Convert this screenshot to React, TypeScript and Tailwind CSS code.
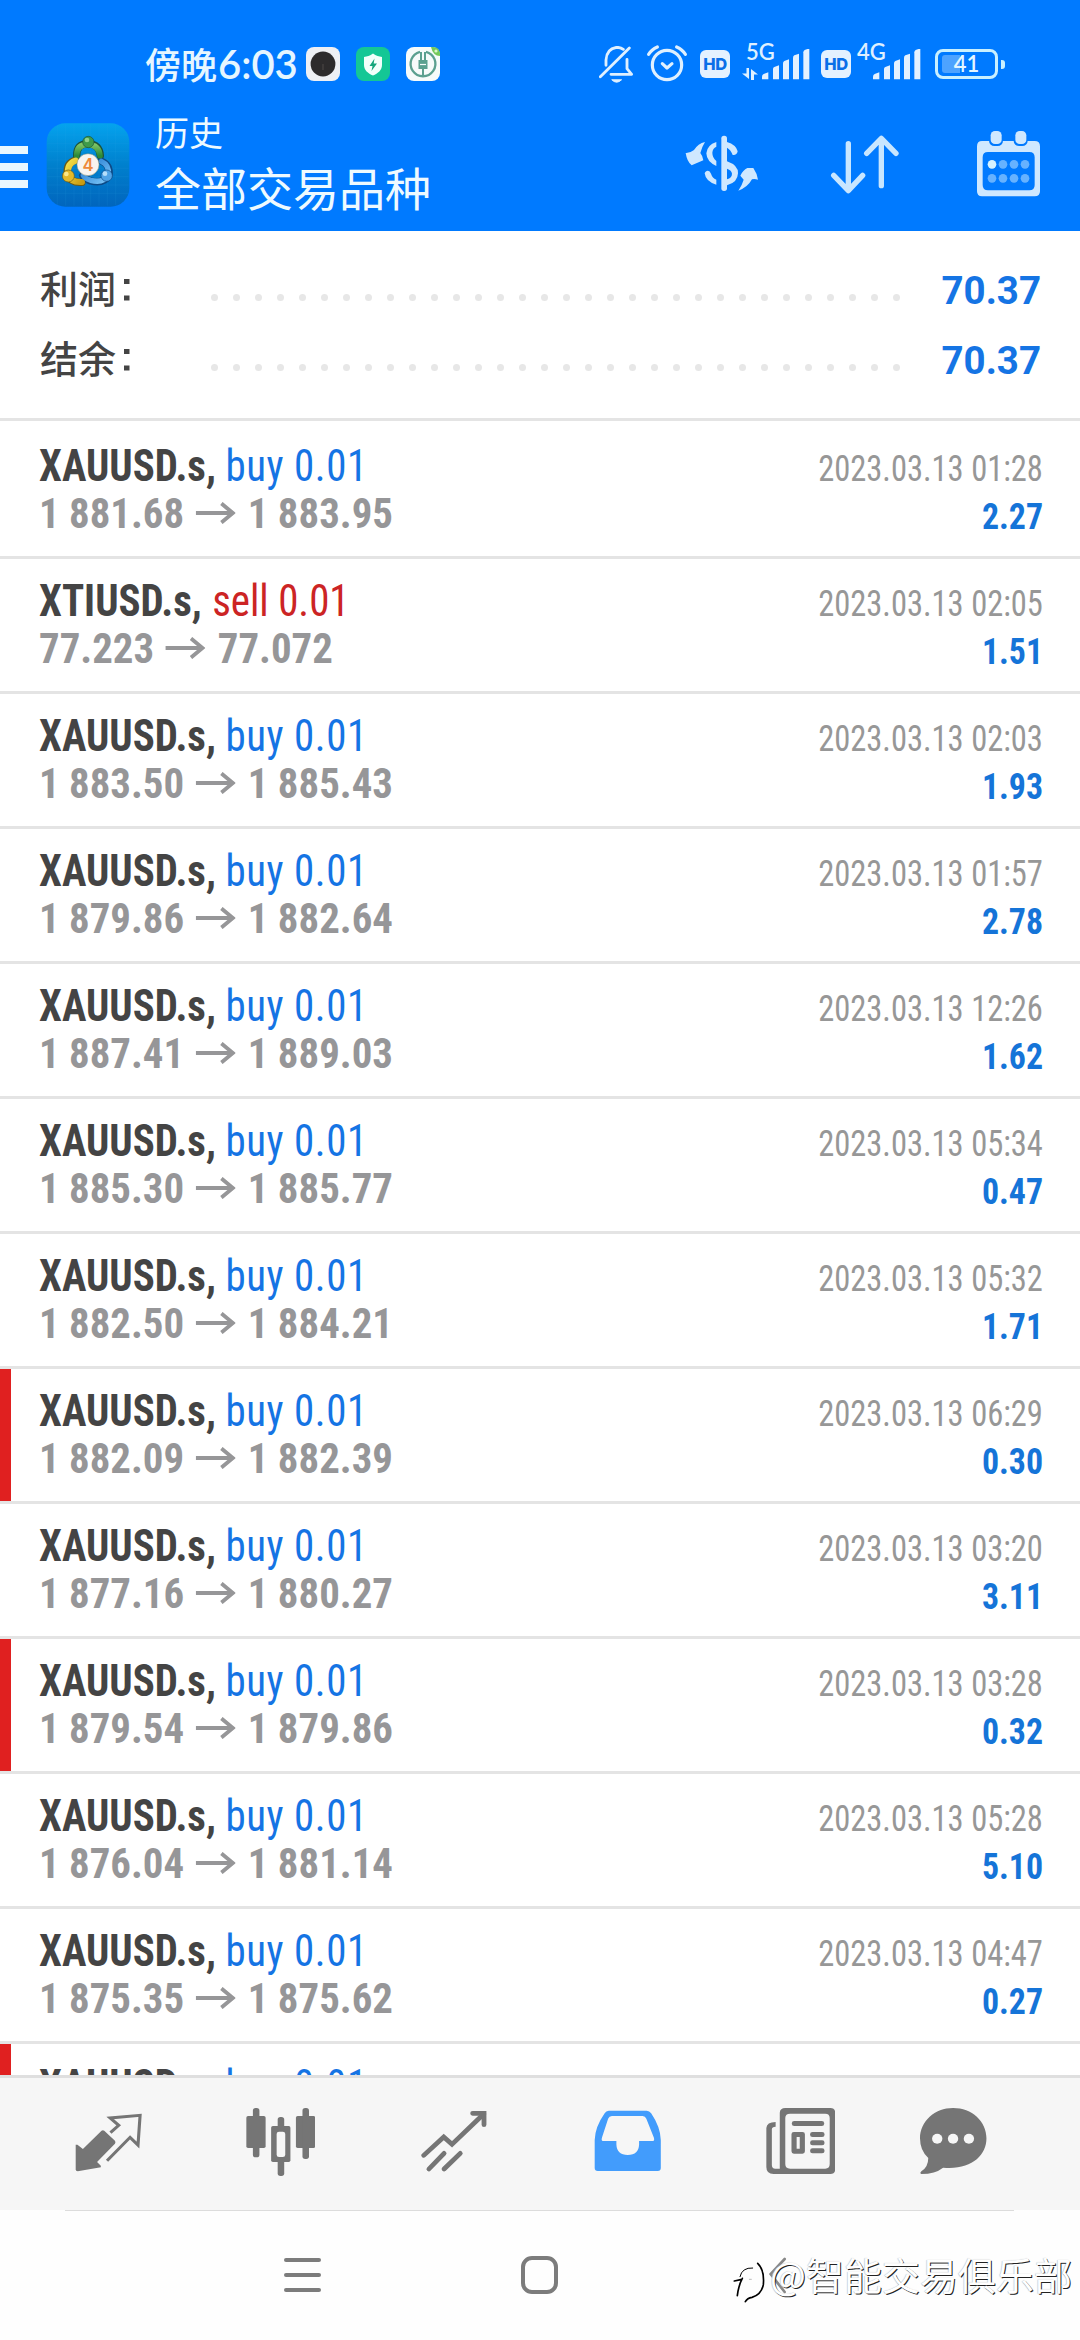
type Trade = {
  symbol: string;
  side: 'buy' | 'sell';
  from: string;
  to: string;
  time: string;
  profit: string;
  flagged?: boolean;
};

const trades: Trade[] = [
  { symbol: 'XAUUSD.s', side: 'buy', from: '1 881.68', to: '1 883.95', time: '2023.03.13 01:28', profit: '2.27' },
  { symbol: 'XTIUSD.s', side: 'sell', from: '77.223', to: '77.072', time: '2023.03.13 02:05', profit: '1.51' },
  { symbol: 'XAUUSD.s', side: 'buy', from: '1 883.50', to: '1 885.43', time: '2023.03.13 02:03', profit: '1.93' },
  { symbol: 'XAUUSD.s', side: 'buy', from: '1 879.86', to: '1 882.64', time: '2023.03.13 01:57', profit: '2.78' },
  { symbol: 'XAUUSD.s', side: 'buy', from: '1 887.41', to: '1 889.03', time: '2023.03.13 12:26', profit: '1.62' },
  { symbol: 'XAUUSD.s', side: 'buy', from: '1 885.30', to: '1 885.77', time: '2023.03.13 05:34', profit: '0.47' },
  { symbol: 'XAUUSD.s', side: 'buy', from: '1 882.50', to: '1 884.21', time: '2023.03.13 05:32', profit: '1.71' },
  { symbol: 'XAUUSD.s', side: 'buy', from: '1 882.09', to: '1 882.39', time: '2023.03.13 06:29', profit: '0.30', flagged: true },
  { symbol: 'XAUUSD.s', side: 'buy', from: '1 877.16', to: '1 880.27', time: '2023.03.13 03:20', profit: '3.11' },
  { symbol: 'XAUUSD.s', side: 'buy', from: '1 879.54', to: '1 879.86', time: '2023.03.13 03:28', profit: '0.32', flagged: true },
  { symbol: 'XAUUSD.s', side: 'buy', from: '1 876.04', to: '1 881.14', time: '2023.03.13 05:28', profit: '5.10' },
  { symbol: 'XAUUSD.s', side: 'buy', from: '1 875.35', to: '1 875.62', time: '2023.03.13 04:47', profit: '0.27' },
];

function HdBadge({ className }: { className: string }) {
  return (
    <div className={`flex h-7 w-[30px] shrink-0 items-center justify-center rounded-[6px] bg-[#e4f1ff] font-[Inter] text-[16.500px] font-extrabold leading-none tracking-[-0.5px] text-[#0a6fe8] ${className}`}>
      HD
    </div>
  );
}

function SignalBars() {
  return (
    <svg className="h-[31px] w-[48px]" viewBox="0 0 144 93" fill="#e4f1ff">
      <path d="M0 91V83Q0 77 5 75L19 70V91Z" />
      <path d="M33 91V60Q33 56 37 54L51 49V91Z" />
      <path d="M63 91V43Q63 38 67 36L81 31V91Z" />
      <path d="M93 91V26Q93 21 97 19L111 14V91Z" />
      <path d="M124 91V10Q124 5 128 3L142 -2V91Z" />
    </svg>
  );
}

function StatusBar() {
  return (
    <div className="flex h-[100px] items-start">
      <div className="ml-[145px] flex w-[152px] shrink-0 items-baseline pt-9 whitespace-nowrap text-[#e6f6ff]">
        <span className="shrink-0 font-['Noto_Sans_CJK_SC',sans-serif] text-[36px] font-medium leading-[54px]">傍晚</span>
        <span className="ml-px font-[Lato] text-[40px] font-semibold leading-[50px]">6:03</span>
      </div>
      <svg className="mt-[47px] ml-[9px] h-[34px] w-[34px]" viewBox="0 0 34 34">
        <rect width="34" height="34" rx="8" fill="#eef0f4" />
        <circle cx="17" cy="17" r="12.4" fill="#2d2b2c" />
        <path d="M17 17v6" stroke="#55504f" strokeWidth="0.8" />
      </svg>
      <svg className="mt-[47px] ml-4 h-[34px] w-[34px]" viewBox="0 0 34 34">
        <rect width="34" height="34" rx="8" fill="#14c795" />
        <path d="M17 6.5C14 9 11 9.5 8 10v8c0 5 4 8.500 9 10.500 5-2 9-5.500 9-10.500v-8c-3-.5-6-1-9-3.500Z" fill="#f2fffb" />
        <path d="M18.500 11.500 13.500 19h3l-1 5 5.500-7.500h-3.300Z" fill="#14a67c" />
      </svg>
      <svg className="mt-[47px] ml-4 h-[34px] w-[34px]" viewBox="0 0 34 34">
        <rect width="34" height="34" rx="8" fill="#f6fbfa" />
        <path d="M14 4.800A12.400 12.400 0 1 0 20 4.800" fill="none" stroke="#5ba08f" strokeWidth="2.300" />
        <path d="M15 5v9M19 5v9M17 19v9" fill="none" stroke="#5ba08f" strokeWidth="2" />
        <path d="M12.500 13h9v9h-9Z" fill="#5ba08f" />
        <path d="M14 17.500h6" stroke="#f6fbfa" strokeWidth="1.200" />
        <path d="M25 0h2q7 0 7 8v1q-7 0-9-9Z" fill="#74c95a" />
        <circle cx="30" cy="4" r="1.600" fill="#d9f5c8" />
      </svg>

      {/* silent, alarm */}
      <svg className="mt-[46px] ml-[159px] h-[38px] w-[35px]" viewBox="57 48 105 114" fill="none" stroke="#dff0ff" strokeWidth="8.500" strokeLinecap="round" strokeLinejoin="round">
        <path d="M61 140 148 54" />
        <path d="M78 106V90Q80 56 110 52Q122 52 130 58" />
        <path d="M93 133H155L141 116V88" />
        <path d="M96 150Q110 164 124 150Z" fill="#dff0ff" strokeWidth="3" />
      </svg>
      <svg className="mt-[45px] ml-[13px] h-[38px] w-[40px]" viewBox="202 45 120 114" fill="none" stroke="#dff0ff" strokeWidth="9.500" strokeLinecap="round">
        <circle cx="262" cy="105" r="44" />
        <path d="M207 73Q215 59 233 51M317 73Q309 59 291 51" />
        <path d="M248 101 262 114 277 101" strokeLinejoin="round" />
      </svg>
      <HdBadge className="mt-[50px] ml-[13px]" />
      <div className="relative mt-[49px] ml-[32px] h-[31px] w-[48px]">
        <span className="absolute -top-[8px] -left-[16px] font-[Lato] text-[22px] font-semibold leading-[22px] text-[#dff0ff]">5G</span>
        <svg className="absolute top-[19px] -left-[20px] h-[12px] w-[17px]" viewBox="0 0 17 12" fill="#dff0ff">
          <path d="M4.500 0h2.500v11L0 5.500h4.500ZM9 12V1l7 5.500h-4V12Z" />
        </svg>
        <SignalBars />
      </div>
      <HdBadge className="mt-[50px] ml-[11px]" />
      <div className="relative mt-[49px] ml-[22px] h-[31px] w-[48px]">
        <span className="absolute -top-[8px] -left-[16px] font-[Lato] text-[22px] font-semibold leading-[22px] text-[#dff0ff]">4G</span>
        <SignalBars />
      </div>
      <div className="mt-[49px] ml-[14px] flex items-center">
        <div className="relative flex h-[30px] w-[63px] items-center justify-center rounded-[8px] border-[3px] border-[#c9f0ff]">
          <div className="absolute top-[3px] left-1 h-[18px] w-[18px] rounded-l-[3px] bg-[#4da3ff]" />
          <span className="relative font-[Lato] text-[22px] font-semibold leading-none text-[#e4f6ff]">41</span>
        </div>
        <div className="ml-[3px] h-[9px] w-1 rounded-r-[3px] bg-[#c9f0ff]" />
      </div>
    </div>
  );
}

function AppLogo() {
  return (
    <svg className="mt-[23px] ml-[18px] h-[84px] w-[84px]" viewBox="49 24 250 252">
      <defs>
        <linearGradient id="tile" x1="0" y1="0" x2="0" y2="1">
          <stop offset="0" stopColor="#04a3ee" />
          <stop offset="0.5" stopColor="#0080cd" />
          <stop offset="1" stopColor="#0165bd" />
        </linearGradient>
        <linearGradient id="green" x1="0" y1="0" x2="0" y2="1">
          <stop offset="0" stopColor="#7fc564" />
          <stop offset="1" stopColor="#2c8a38" />
        </linearGradient>
        <linearGradient id="gold" x1="0" y1="0" x2="1" y2="1">
          <stop offset="0" stopColor="#f5e04a" />
          <stop offset="1" stopColor="#c89c12" />
        </linearGradient>
        <linearGradient id="sky" x1="0" y1="0" x2="1" y2="1">
          <stop offset="0" stopColor="#1d77cf" />
          <stop offset="1" stopColor="#7cc6f7" />
        </linearGradient>
      </defs>
      <rect x="50" y="25" width="248" height="250" rx="56" fill="url(#tile)" />
      <path d="M82 30V270M107 28V272M132 28V272M157 28V272M182 28V272M207 28V272M232 28V272M257 30V270M54 60H294M52 85H296M52 110H296M52 135H296M52 160H296M52 185H296M52 210H296M54 235H294" stroke="#3db0ee" strokeOpacity="0.22" strokeWidth="1.500" />
      <g fill="none" strokeLinecap="round">
        <path d="M140 122Q140 86 174 86Q209 88 211 122" stroke="#1d5136" strokeWidth="22" />
        <path d="M136 136Q108 144 112 178Q120 204 156 202" stroke="#6b5a14" strokeWidth="22" />
        <path d="M214 138Q241 150 237 180Q222 208 182 198Q162 190 158 182" stroke="#0e4a86" strokeWidth="22" />
        <path d="M140 122Q140 88 174 88Q207 90 210 122" stroke="url(#green)" strokeWidth="17" />
        <path d="M137 137Q110 146 114 178Q122 203 156 201" stroke="url(#gold)" strokeWidth="18" />
        <path d="M214 139Q239 150 235 180Q220 206 182 196Q164 190 160 182" stroke="url(#sky)" strokeWidth="16" />
      </g>
      <circle cx="175" cy="81" r="17" fill="#3f9a4a" stroke="#1d5136" strokeWidth="2" />
      <circle cx="171" cy="75" r="7" fill="#8fd08b" />
      <circle cx="115" cy="183" r="18" fill="#e3b92a" stroke="#6b5a14" strokeWidth="2" />
      <circle cx="109" cy="177" r="7" fill="#fbe889" />
      <circle cx="230" cy="182" r="17" fill="#4fa3e6" stroke="#0e4a86" strokeWidth="2" />
      <circle cx="225" cy="176" r="7" fill="#b5defa" />
      <circle cx="174" cy="149" r="33" fill="#f8f4f0" stroke="#7d8a72" strokeWidth="1.500" />
      <text x="174" y="167" textAnchor="middle" fontFamily="Inter, sans-serif" fontSize="50" fontWeight="600" fill="#ee8a3c">4</text>
    </svg>
  );
}

function AppBar() {
  return (
    <div className="flex h-[131px] items-start">
      <div className="mt-[46px] flex w-7 flex-col gap-[9px]">
        <div className="h-2 bg-[#e9f7ff]" />
        <div className="h-2 bg-[#e9f7ff]" />
        <div className="h-2 bg-[#e9f7ff]" />
      </div>
      <AppLogo />
      <div className="ml-[25px] flex w-[530px] flex-col font-['Noto_Sans_CJK_SC',sans-serif] text-[#eefaff]">
        <span className="mt-[6px] text-[34px] leading-[52px]">历史</span>
        <span className="-mt-[4px] text-[46px] leading-[64px]">全部交易品种</span>
      </div>
      <svg className="mt-[34px] h-[59px] w-[74px]" viewBox="76 72 222 177" fill="#cfe8ff">
        <rect x="185" y="77" width="17" height="166" rx="8" />
        <path d="M78 129Q90 130 103 120Q115 101 136 96Q126 112 122 129Q130 139 131 151L96 166Q82 155 78 129Z" />
        <path d="M170 96V110Q159 115 158 128Q158 143 170 153V168Q141 155 140 130Q142 105 170 96Z" />
        <path d="M202 96Q229 104 234 124Q231 137 219 135Q213 119 202 113Z" />
        <path d="M202 154Q236 166 235 190Q234 218 202 226ZM202 176V208Q217 204 217 191Q216 181 202 176Z" fillRule="evenodd" />
        <path d="M141 183Q150 180 154 191Q158 204 170 209V224Q138 215 135 190Q136 185 141 183Z" />
        <path d="M236 242Q247 226 252 209L242 197Q250 180 263 174L281 174Q292 190 295 209Q284 205 277 208Q264 232 236 242Z" />
      </svg>
      <svg className="mt-[34px] ml-[71px] h-[60px] w-[70px]" viewBox="511 72 210 180" fill="none" stroke="#c8e6ff" strokeWidth="16" strokeLinecap="round" strokeLinejoin="round">
        <path d="M566 101V240M522 196 566 242 609 196" />
        <path d="M665 227V87M621 130 665 85 709 130" />
      </svg>
      <svg className="mt-[30px] ml-[76px] h-[67px] w-[65px]" viewBox="948 60 195 201" fill="#cfe8ff">
        <path d="M966 93H1124Q1140 93 1140 109V244Q1140 259 1124 259H966Q951 259 951 244V109Q951 93 966 93ZM984 126Q968 126 968 142V225Q968 241 984 241H1108Q1124 241 1124 225V142Q1124 126 1108 126Z" fillRule="evenodd" />
        <rect x="987" y="58" width="42" height="50" rx="16" fill="#007aff" />
        <rect x="1061" y="58" width="42" height="50" rx="16" fill="#007aff" />
        <rect x="992" y="63" width="33" height="39" rx="13" />
        <rect x="1066" y="63" width="33" height="39" rx="13" />
        <circle cx="996" cy="163" r="13" fill="#d6f2ff" />
        <g fill="#66b2ff">
          <circle cx="1029" cy="163" r="13" /><circle cx="1062" cy="163" r="13" /><circle cx="1095" cy="163" r="13" />
          <circle cx="996" cy="205" r="13" /><circle cx="1029" cy="205" r="13" /><circle cx="1062" cy="205" r="13" /><circle cx="1095" cy="205" r="13" />
        </g>
      </svg>
    </div>
  );
}

function SummaryRow({ label, value }: { label: string; value: string }) {
  return (
    <div className="flex h-[70px] items-center">
      <span className="w-[83px] font-['Noto_Sans_CJK_SC',sans-serif] text-[38px] font-medium leading-[70px] text-[#444]">{label}</span>
      <svg className="mt-[5px] h-[22px] w-[7px]" viewBox="0 0 7 22" fill="#444">
        <rect x="1" y="0" width="5.500" height="5" />
        <rect x="1" y="16.500" width="5.500" height="5" />
      </svg>
      <div className="mt-[21px] ml-[81px] flex flex-1 gap-[15px]">
        {Array.from({ length: 32 }, (_, i) => (
          <span key={i} className="h-[7px] w-[7px] shrink-0 rounded-full bg-[#e7e7e7]" />
        ))}
      </div>
      <span className="mt-[7px] font-[Roboto] text-[38.500px] font-bold leading-[60px] text-[#1574e4]">{value}</span>
    </div>
  );
}

function TradeRow({ t }: { t: Trade }) {
  return (
    <div className="relative flex h-[135px] shrink-0 justify-between border-b-[3px] border-[#e4e4e4] pr-[37px] pl-[39px] font-['Roboto_Condensed',Roboto,sans-serif]">
      {t.flagged && <div className="absolute top-0 left-0 h-[132px] w-[11px] bg-[#e02020]" />}
      <div className="flex flex-col items-start pt-[18px]">
        <div className="origin-left scale-x-[0.93] text-[44px] leading-[48px] whitespace-pre">
          <span className="font-bold text-[#444]">{t.symbol}, </span>
          <span className={t.side === 'buy' ? 'tracking-[0.6px] text-[#1574e4]' : 'ml-px text-[#cc2424]'}>{t.side} 0.01</span>
        </div>
        <div className="-mt-px flex origin-left scale-x-[0.95] items-center text-[43px] font-bold leading-[48px] text-[#969698]">
          <span>{t.from}</span>
          <svg className="mr-[13px] ml-[12px] h-[22px] w-[42px]" viewBox="0 0 42 22" fill="none" stroke="#969698" strokeWidth="4">
            <path d="M0 11H39M27 1.500 39 11 27 20.500" />
          </svg>
          <span>{t.to}</span>
        </div>
      </div>
      <div className="flex flex-col items-end pt-[21px] text-[36px] leading-[48px]">
        <span className="origin-right scale-x-[0.903] text-[#979797]">{t.time}</span>
        <span className="origin-right scale-x-[0.94] font-bold text-[#1574d8]">{t.profit}</span>
      </div>
    </div>
  );
}

function TabBar() {
  const icon = 'h-[68px] w-[69px] shrink-0';
  return (
    <div className="flex h-[135px] items-start border-t-[3px] border-[#dfdfdf] bg-[#f6f6f6] pt-[30px] pl-[75px]">
      <svg className={icon} viewBox="217 234 200.4 204" preserveAspectRatio="none" fill="#757575">
        <path d="M219 344H224L240 357L294 302Q298 299 302 302L333 332Q336 337 333 341L281 396L292 407V412L225 424Q219 423 219 419Z" />
        <path d="M320 308 344 286 319 264 406 256 400 345 377 322 310 392" fill="none" stroke="#757575" strokeWidth="9" />
      </svg>
      <svg className={`${icon} ml-[102px]`} viewBox="715 234 200.4 204" preserveAspectRatio="none" fill="#757575">
        <rect x="716" y="258" width="56" height="96" rx="5" /><rect x="735" y="234" width="19" height="148" rx="8" />
        <rect x="860" y="258" width="56" height="96" rx="5" /><rect x="879" y="234" width="19" height="153" rx="8" />
        <rect x="788" y="288" width="56" height="108" rx="5" /><rect x="807" y="261" width="19" height="177" rx="8" />
        <rect x="804" y="305" width="25" height="76" rx="7" fill="#f6f6f6" />
      </svg>
      <svg className={`${icon} ml-[106px]`} viewBox="1223 234 200.4 204" preserveAspectRatio="none" fill="none" stroke="#757575" strokeWidth="14" strokeLinecap="round">
        <path d="M1231 376 1289 321 1313 343 1405 252" strokeLinejoin="miter" />
        <path d="M1373 250H1406V284" />
        <path d="M1246 417 1290 370M1290 417 1337 370" />
      </svg>
      <svg className={`${icon} ml-[104px]`} viewBox="156 234 200.4 204" preserveAspectRatio="none">
        <path d="M199 242H309Q317 242 322 250Q349 291 350 330V414Q350 423 341 423H167Q158 423 158 414V330Q159 291 187 250Q191 242 199 242ZM208 258Q200 258 197 266L179 323Q176 333 184 333H221V343Q222 375 254 375Q286 375 287 343V333H325Q333 333 330 323L308 266Q305 258 297 258Z" fill="#429cfc" fillRule="evenodd" />
      </svg>
      <svg className={`${icon} ml-[103px]`} viewBox="657 234 200.4 204" preserveAspectRatio="none" fill="#757575">
        <path d="M713 234H844Q858 234 858 248V418Q858 432 844 432H679Q658 432 658 411V294Q659 276 685 276V290Q674 290 674 298V405Q674 416 684 416H697V248Q698 234 713 234ZM727 251Q713 251 713 264V402Q713 416 727 416H829Q842 416 842 402V264Q842 251 829 251Z" fillRule="evenodd" />
        <rect x="732" y="273" width="94" height="15" rx="7" />
        <path d="M738 306H763Q770 306 770 313V364Q770 371 763 371H738Q731 371 731 364V313Q731 306 738 306ZM746 321V356H755V321Z" fillRule="evenodd" />
        <rect x="785" y="306" width="42" height="15" rx="7" /><rect x="785" y="331" width="42" height="15" rx="7" /><rect x="785" y="355" width="42" height="15" rx="7" />
      </svg>
      <svg className={`${icon} ml-[85px]`} viewBox="1103 234 200.4 204" preserveAspectRatio="none">
        <path d="M1199 234C1254 234 1296 274 1296 325C1296 378 1250 421 1170 413Q1147 432 1107 432Q1101 430 1107 424Q1127 411 1127 384Q1103 362 1103 325C1103 274 1146 234 1199 234Z" fill="#757575" />
        <g fill="#f6f6f6"><circle cx="1153" cy="326" r="15" /><circle cx="1199" cy="326" r="15" /><circle cx="1245" cy="326" r="15" /></g>
      </svg>
    </div>
  );
}

function SystemNav() {
  return (
    <div className="relative flex h-[130px] items-start bg-[#fefefe]">
      <div className="absolute top-0 left-[65px] h-px w-[949px] bg-[#dcdcdc]" />
      <div className="mt-[48px] ml-[284px] flex w-[37px] flex-col gap-[11px]">
        <div className="h-1 rounded-full bg-[#7c7c7c]" />
        <div className="h-1 rounded-full bg-[#7c7c7c]" />
        <div className="h-1 rounded-full bg-[#7c7c7c]" />
      </div>
      <div className="mt-[46px] ml-[200px] h-[38px] w-[37px] rounded-[11px] border-4 border-[#7c7c7c]" />
      <svg className="absolute top-[40px] left-[730px] h-[60px] w-[76px]" viewBox="30 30 228 180" fill="none" stroke="#000" strokeLinecap="round">
        <path d="M194 57 152 102 194 156" stroke="#888" strokeWidth="8" />
        <path d="M43 123 62 119M67 115Q56 135 52 167" strokeWidth="5" />
        <path d="M60 110Q66 82 98 84" strokeWidth="3" />
        <path d="M113 70Q134 90 130 134Q124 164 96 172Q82 174 76 185" strokeWidth="5" />
        <path d="M88 118H94" strokeWidth="2" stroke="#999" />
      </svg>
      <span className="absolute top-[36px] left-[770px] font-['Noto_Sans_CJK_SC',sans-serif] text-[38px] leading-[56px] whitespace-nowrap text-white [text-shadow:1px_1px_0.5px_#222,-0.5px_-0.5px_1px_#bbb]">@智能交易俱乐部</span>
    </div>
  );
}

export default function App() {
  return (
    <div className="flex h-[2340px] w-[1080px] flex-col overflow-hidden bg-white">
      <header className="h-[231px] shrink-0 bg-[#007aff]">
        <StatusBar />
        <AppBar />
      </header>
      <section className="h-[190px] shrink-0 border-b-[3px] border-[#e4e4e4] pt-[21px] pr-[39px] pl-[40px]">
        <SummaryRow label="利润" value="70.37" />
        <SummaryRow label="结余" value="70.37" />
      </section>
      <main className="flex h-[1654px] shrink-0 flex-col overflow-hidden bg-white pt-[3px]">
        {trades.map((t) => <TradeRow key={t.time} t={t} />)}
        <TradeRow t={{ symbol: 'XAUUSD.s', side: 'buy', from: '', to: '', time: '', profit: '', flagged: true }} />
      </main>
      <footer className="shrink-0">
        <TabBar />
        <SystemNav />
      </footer>
    </div>
  );
}
